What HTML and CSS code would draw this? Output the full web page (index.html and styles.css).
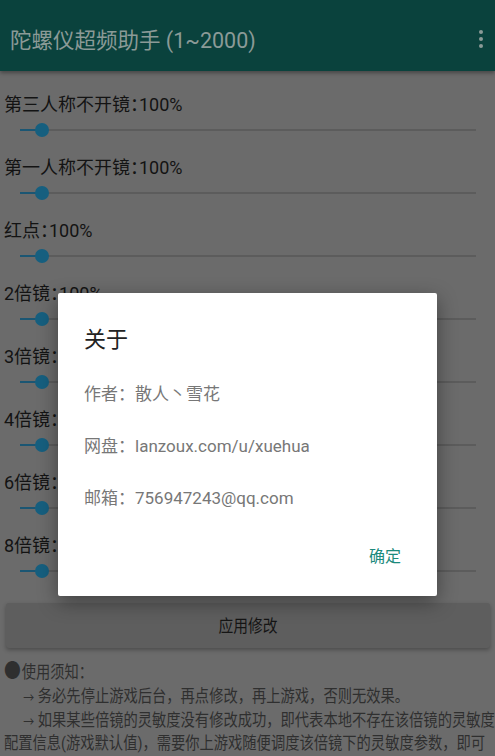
FILE: index.html
```html
<!DOCTYPE html>
<html lang="zh-CN">
<head>
<meta charset="utf-8">
<title>陀螺仪超频助手</title>
<link rel="stylesheet" href="styles.css">
</head>
<body>
<div class="app">
  <header class="toolbar">
    <h1 class="title">陀螺仪超频助手 (1~2000)</h1>
    <span class="menu"><i></i><i></i><i></i></span>
  </header>

  <main class="content">
    <section class="settings">
      <div class="setting">
        <div class="label">第三人称不开镜：100%</div>
        <div class="slider"><div class="track"><div class="fill"></div><div class="thumb"></div></div></div>
      </div>
      <div class="setting">
        <div class="label">第一人称不开镜：100%</div>
        <div class="slider"><div class="track"><div class="fill"></div><div class="thumb"></div></div></div>
      </div>
      <div class="setting">
        <div class="label">红点：100%</div>
        <div class="slider"><div class="track"><div class="fill"></div><div class="thumb"></div></div></div>
      </div>
      <div class="setting">
        <div class="label">2倍镜：100%</div>
        <div class="slider"><div class="track"><div class="fill"></div><div class="thumb"></div></div></div>
      </div>
      <div class="setting">
        <div class="label">3倍镜：100%</div>
        <div class="slider"><div class="track"><div class="fill"></div><div class="thumb"></div></div></div>
      </div>
      <div class="setting">
        <div class="label">4倍镜：100%</div>
        <div class="slider"><div class="track"><div class="fill"></div><div class="thumb"></div></div></div>
      </div>
      <div class="setting">
        <div class="label">6倍镜：100%</div>
        <div class="slider"><div class="track"><div class="fill"></div><div class="thumb"></div></div></div>
      </div>
      <div class="setting">
        <div class="label">8倍镜：100%</div>
        <div class="slider"><div class="track"><div class="fill"></div><div class="thumb"></div></div></div>
      </div>
    </section>

    <button class="apply"><span>应用修改</span></button>

    <div class="notes">
      <div class="notes-head"><span class="dot">●</span>使用须知：</div>
      <p><span class="arrow">→</span> 务必先停止游戏后台，再点修改，再上游戏，否则无效果。</p>
      <p><span class="arrow">→</span> 如果某些倍镜的灵敏度没有修改成功，即代表本地不存在该倍镜的灵敏度配置信息(游戏默认值)，需要你上游戏随便调度该倍镜下的灵敏度参数，即可让游戏在本地生成该倍镜的灵敏度配置信息，然后你再退出游戏打开本软件修改即可。</p>
    </div>
  </main>

  <div class="dialog">
    <div class="dialog-title">关于</div>
    <div class="dialog-body">
      <p>作者：散人丶雪花</p>
      <p>网盘：lanzoux.com/u/xuehua</p>
      <p>邮箱：756947243@qq.com</p>
    </div>
    <div class="dialog-actions"><span class="ok">确定</span></div>
  </div>
</div>
</body>
</html>
```

FILE: styles.css
```css
* { box-sizing: border-box; }

html, body {
  margin: 0;
  padding: 0;
  width: 495px;
  height: 756px;
  overflow: hidden;
  background: #6b6b6b;
  font-family: Roboto, "Noto Sans CJK SC", sans-serif;
}

.app {
  position: relative;
  width: 495px;
  height: 756px;
  overflow: hidden;
  background: #6b6b6b;
}

/* toolbar */
.toolbar {
  position: relative;
  z-index: 1;
  height: 71px;
  padding-top: 10px;
  display: flex;
  align-items: center;
  justify-content: space-between;
  background: #0a423d;
  box-shadow: 0 2px 4px rgba(0, 0, 0, 0.35);
}
.title {
  margin: 0 0 0 10px;
  font-size: 21.5px;
  font-weight: 400;
  line-height: 30px;
  color: #8b9a97;
}
.menu {
  display: flex;
  flex-direction: column;
  gap: 3px;
  margin-right: 12px;
  margin-top: -4px;
}
.menu i {
  display: block;
  width: 4px;
  height: 4px;
  border-radius: 50%;
  background: #8b9a97;
}

/* settings */
.content {
  padding-top: 22px;
}
.settings {
  display: flex;
  flex-direction: column;
  gap: 13px;
}
.label {
  padding-left: 4px;
  font-size: 18px;
  line-height: 24px;
  color: #131313;
  font-feature-settings: "halt";
}
.slider {
  height: 26px;
  padding: 0 19px 0 20px;
  display: flex;
  align-items: center;
}
.track {
  position: relative;
  flex: 1;
  height: 2px;
  background: #5c5c5c;
}
.fill {
  position: absolute;
  left: 0;
  top: 0;
  width: 22px;
  height: 2px;
  background: #1b5673;
}
.thumb {
  position: absolute;
  left: 15px;
  top: -6px;
  width: 14px;
  height: 14px;
  border-radius: 50%;
  background: #165f7f;
}

/* apply button */
.apply {
  display: flex;
  align-items: center;
  justify-content: center;
  width: 484px;
  height: 45px;
  margin: 19px 0 0 6px;
  border: 0;
  border-radius: 3px;
  background: #5e5e5e;
  box-shadow: 0 2px 4px rgba(0, 0, 0, 0.3);
  font-family: inherit;
  padding: 0;
}
.apply span {
  display: inline-block;
  font-size: 17px;
  line-height: 24px;
  color: #151515;
  transform: scaleX(0.87);
}

/* notes */
.notes {
  width: 586px;
  margin: 13px 0 0 4px;
  transform: scaleX(0.84);
  transform-origin: 0 0;
  font-size: 17px;
  line-height: 23.75px;
  color: #2f2f2f;
}
.notes-head .dot {
  font-size: 20px;
  line-height: 0;
  margin-right: 1px;
}
.notes p {
  margin: 0;
  text-indent: 23px;
}
.notes .arrow {
  font-family: "Noto Sans CJK SC", sans-serif;
  font-size: 13px;
  line-height: 0;
}

/* dialog */
.dialog {
  position: absolute;
  left: 58px;
  top: 293px;
  width: 379px;
  padding: 32px 26px 0;
  background: #ffffff;
  border-radius: 2px;
  box-shadow: 0 6px 20px rgba(0, 0, 0, 0.4);
}
.dialog-title {
  font-size: 22px;
  line-height: 30px;
  color: #222222;
  margin-bottom: 27px;
}
.dialog-body p {
  margin: 0 0 28px;
  font-size: 17px;
  line-height: 24px;
  color: #777777;
}
.dialog-body p:last-child {
  margin-bottom: 35px;
}
.dialog-actions {
  display: flex;
  justify-content: flex-end;
  padding: 0 10px 27px 0;
}
.ok {
  font-size: 16px;
  line-height: 24px;
  font-weight: 400;
  color: #1b8a7c;
}
```
